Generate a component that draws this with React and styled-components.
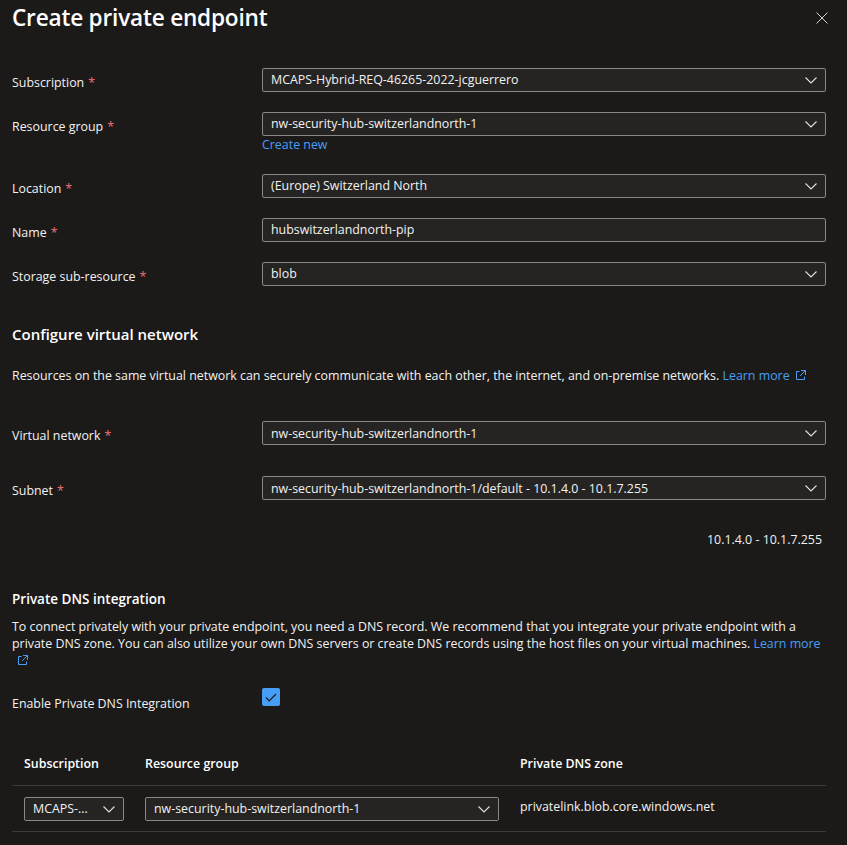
import React from "react";
import styled, { createGlobalStyle } from "styled-components";

const Global = createGlobalStyle`
  html, body {
    margin: 0;
    padding: 0;
    background: #1b1a19;
  }
  body {
    font-family: "Open Sans", "Noto Sans", sans-serif;
    font-size: 12.4px;
    color: #f3f2f1;
  }
`;

const Page = styled.div`
  width: 847px;
  min-height: 845px;
  box-sizing: border-box;
  padding: 0 21px 0 12px;
  background: #1b1a19;
  overflow: hidden;
`;

const Header = styled.header`
  display: flex;
  justify-content: space-between;
  align-items: center;
  padding-top: 4px;
  margin-bottom: 36px;
  height: 28px;
`;

const Title = styled.h1`
  margin: 0;
  font-size: 22.6px;
  line-height: 28px;
  font-weight: 600;
  color: #ffffff;
  letter-spacing: -0.2px;
`;

const CloseButton = styled.button`
  background: none;
  border: 0;
  padding: 0;
  margin-right: -2px;
  display: flex;
  cursor: pointer;
`;

const Form = styled.div`
  display: flex;
  flex-direction: column;
  gap: ${(p) => p.gap || 20}px;
  margin-top: ${(p) => p.top || 0}px;
`;

const Row = styled.div`
  display: grid;
  grid-template-columns: 250px 1fr;
  align-items: start;
`;

const Label = styled.div`
  line-height: 18px;
  padding-top: ${(p) => p.offset || 6}px;
  white-space: nowrap;
`;

const Required = styled.span`
  color: #f1707b;
  margin-left: 4px;
`;

const Field = styled.div`
  display: flex;
  flex-direction: column;
  line-height: 18px;
`;

const Box = styled.div`
  display: flex;
  align-items: center;
  justify-content: space-between;
  height: 24px;
  width: ${(p) => (p.width ? `${p.width}px` : "auto")};
  box-sizing: border-box;
  border: 1px solid #8a8886;
  border-radius: 2px;
  background: #252423;
  padding: 0 8px 0 8px;
  color: #f3f2f1;
  white-space: nowrap;
  overflow: hidden;
`;

const Value = styled.span`
  overflow: hidden;
  text-overflow: ellipsis;
`;

const Link = styled.a`
  color: #479ef5;
  text-decoration: none;
  cursor: pointer;
`;

const SectionTitle = styled.h2`
  margin: ${(p) => p.top}px 0 0;
  font-size: ${(p) => p.size}px;
  line-height: 22px;
  font-weight: 600;
  color: #ffffff;
`;

const Paragraph = styled.p`
  margin: ${(p) => p.top}px 0 0;
  line-height: 17px;
`;

const RangeText = styled.div`
  margin-top: 31px;
  text-align: right;
  padding-right: 4px;
  line-height: 18px;
`;

const CheckRow = styled.div`
  display: grid;
  grid-template-columns: 250px 1fr;
  align-items: start;
  margin-top: 19px;
`;

const CheckBox = styled.div`
  width: 18px;
  height: 18px;
  border-radius: 2px;
  background: #479ef5;
  display: flex;
  align-items: center;
  justify-content: center;
`;

const Table = styled.div`
  margin-top: 29px;
  display: grid;
  grid-template-columns: 121px 375px 1fr;
`;

const HeadCell = styled.div`
  padding: 13px 0 12px 12px;
  line-height: 18px;
  font-weight: 600;
  color: #ffffff;
  border-bottom: 1px solid #3b3a39;
`;

const Cell = styled.div`
  padding: ${(p) => (p.text ? "12px" : "11px")} 0 10px 12px;
  line-height: 18px;
  border-bottom: 1px solid #3b3a39;
`;

const Chevron = () => (
  <svg width="12" height="7" viewBox="0 0 12 7" fill="none">
    <path d="M0.5 0.5 L6 6 L11.5 0.5" stroke="#e1dfdd" strokeWidth="1.1" />
  </svg>
);

const ExternalIcon = () => (
  <svg width="11" height="11" viewBox="0 0 11 11" fill="none" style={{ marginLeft: 5, verticalAlign: "-1px" }}>
    <path d="M4.5 1.5 H1.5 V9.5 H9.5 V6.5" stroke="#479ef5" strokeWidth="1" />
    <path d="M6 0.5 H10.5 V5 M10.5 0.5 L5 6" stroke="#479ef5" strokeWidth="1" />
  </svg>
);

const Dropdown = ({ value, width, chevron = true }) => (
  <Box width={width}>
    <Value>{value}</Value>
    {chevron && <Chevron />}
  </Box>
);

const fields = [
  { label: "Subscription", value: "MCAPS-Hybrid-REQ-46265-2022-jcguerrero" },
  { label: "Resource group", value: "nw-security-hub-switzerlandnorth-1", createNew: true },
  { label: "Location", value: "(Europe) Switzerland North" },
  { label: "Name", value: "hubswitzerlandnorth-pip", text: true },
  { label: "Storage sub-resource", value: "blob" },
];

export default function App() {
  return (
    <Page>
      <Global />
      <Header>
        <Title>Create private endpoint</Title>
        <CloseButton aria-label="Close">
          <svg width="12" height="12" viewBox="0 0 12 12" fill="none">
            <path d="M0.5 0.5 L11.5 11.5 M11.5 0.5 L0.5 11.5" stroke="#d2d0ce" strokeWidth="1" />
          </svg>
        </CloseButton>
      </Header>

      <Form>
        {fields.map((f) => (
          <Row key={f.label}>
            <Label>
              {f.label}
              <Required>*</Required>
            </Label>
            <Field>
              <Dropdown value={f.value} chevron={!f.text} />
              {f.createNew && <Link>Create new</Link>}
            </Field>
          </Row>
        ))}
      </Form>

      <SectionTitle top={37} size={15}>Configure virtual network</SectionTitle>
      <Paragraph top={22}>
        Resources on the same virtual network can securely communicate with each other, the internet, and on-premise
        networks. <Link>Learn more</Link>
        <ExternalIcon />
      </Paragraph>

      <Form top={37} gap={31}>
        <Row>
          <Label>
            Virtual network<Required>*</Required>
          </Label>
          <Dropdown value="nw-security-hub-switzerlandnorth-1" />
        </Row>
        <Row>
          <Label>
            Subnet<Required>*</Required>
          </Label>
          <Dropdown value="nw-security-hub-switzerlandnorth-1/default - 10.1.4.0 - 10.1.7.255" />
        </Row>
      </Form>

      <RangeText>10.1.4.0 - 10.1.7.255</RangeText>

      <SectionTitle top={39} size={13.5}>Private DNS integration</SectionTitle>
      <Paragraph top={8}>
        To connect privately with your private endpoint, you need a DNS record. We recommend that you integrate your
        private endpoint with a private DNS zone. You can also utilize your own DNS servers or create DNS records using
        the host files on your virtual machines. <Link>Learn more</Link>
        <ExternalIcon />
      </Paragraph>

      <CheckRow>
        <Label offset={7}>Enable Private DNS Integration</Label>
        <CheckBox>
          <svg width="12" height="9" viewBox="0 0 12 9" fill="none">
            <path d="M1 4.5 L4.2 7.8 L11 1" stroke="#1b1a19" strokeWidth="1.2" />
          </svg>
        </CheckBox>
      </CheckRow>

      <Table>
        <HeadCell>Subscription</HeadCell>
        <HeadCell>Resource group</HeadCell>
        <HeadCell>Private DNS zone</HeadCell>
        <Cell>
          <Dropdown value="MCAPS-..." width={100} />
        </Cell>
        <Cell>
          <Dropdown value="nw-security-hub-switzerlandnorth-1" width={354} />
        </Cell>
        <Cell text>privatelink.blob.core.windows.net</Cell>
      </Table>
    </Page>
  );
}
